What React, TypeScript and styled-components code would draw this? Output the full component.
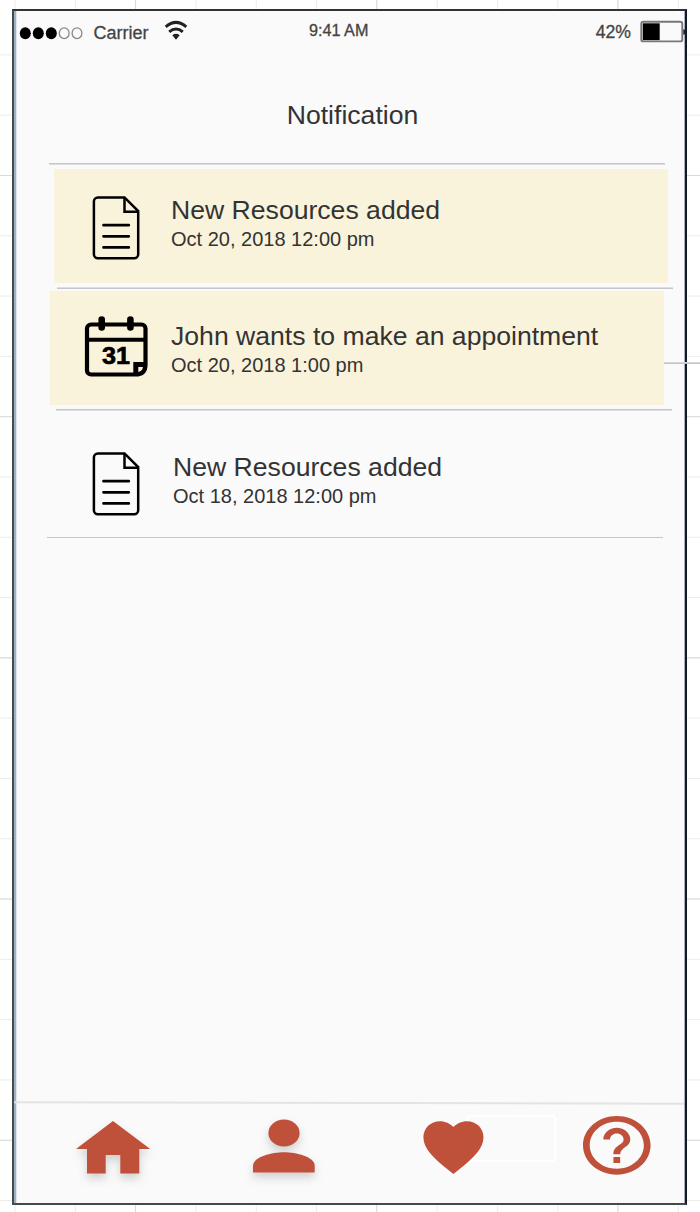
import React from "react";
import styled, { createGlobalStyle } from "styled-components";

const GlobalStyle = createGlobalStyle`
  html, body { margin: 0; padding: 0; }
  body { background: #fff; font-family: "Liberation Sans", Arial, sans-serif; color: #333; overflow: hidden; }
  svg { display: block; flex: none; overflow: visible; }
`;

const Canvas = styled.div`
  box-sizing: border-box;
  position: relative;
  width: 700px;
  height: 1212px;
  overflow: hidden;
  padding: 9px 0 0 12px;
  background-color: #fff;
  background-image:
    linear-gradient(to right, #dadada 1px, transparent 1px),
    linear-gradient(to bottom, #dadada 1px, transparent 1px),
    linear-gradient(to right, #ececec 1px, transparent 1px),
    linear-gradient(to bottom, #ececec 1px, transparent 1px);
  background-size: 241.2px 100%, 100% 241.2px, 60.3px 100%, 100% 60.3px;
  background-position: 135px 0, 0 175px, 14.6px 0, 0 54.4px;
`;

const Phone = styled.main`
  box-sizing: border-box;
  display: flex;
  flex-direction: column;
  width: 675px;
  height: 1196px;
  border: 2px solid #454a4a;
  border-top-color: #333;
  border-right-color: #15191f;
  background: #fafafa;
  box-shadow: inset 2px 0 #9fb2c4, inset 3px 0 #dfe6ed, inset -1px 0 #a3b3c5;
`;

const StatusBar = styled.header`
  display: grid;
  grid-template-columns: 295px 1fr auto;
  height: 44px;
  color: #444;
  -webkit-text-stroke: 0.3px #444;
`;

const StatusGroup = styled.div<{ $top: number; $left?: number }>`
  display: flex;
  align-items: center;
  height: 20px;
  margin-top: ${(p) => p.$top}px;
  padding-left: ${(p) => p.$left ?? 0}px;
`;

const StatusText = styled.span<{ $size: number }>`
  font-size: ${(p) => p.$size}px;
  line-height: 20px;
  white-space: nowrap;
`;

const Carrier = styled(StatusText)`
  margin: 0 15.5px 0 9.5px;
`;

const BatteryLevel = styled(StatusText)`
  margin-right: 8px;
`;

const Heading = styled.h1`
  margin: 45px 0 33px;
  padding-left: 6px;
  font-size: 26.6px;
  line-height: 30px;
  font-weight: 400;
  text-align: center;
`;

const Divider = styled.hr<{ $left: number; $soft?: "top" | "bottom" }>`
  flex: none;
  width: 616px;
  height: 1px;
  margin: 0 0 0 ${(p) => p.$left}px;
  border: 0 solid #dfdfe1;
  border-top-width: ${(p) => (p.$soft === "top" ? 1 : 0)}px;
  border-bottom-width: ${(p) => (p.$soft === "bottom" ? 1 : 0)}px;
  background: #c6c6c8;
`;

const Notice = styled.article<{ $left: number; $top: number; $height: number; $pad: number; $unread?: boolean }>`
  box-sizing: border-box;
  flex: none;
  display: flex;
  width: 614px;
  height: ${(p) => p.$height}px;
  margin: ${(p) => p.$top}px 0 4px ${(p) => p.$left}px;
  padding-left: ${(p) => p.$pad}px;
  background: ${(p) => (p.$unread ? "#faf3dc" : "transparent")};
`;

const NoticeIcon = styled.div<{ $top: number; $width: number }>`
  width: ${(p) => p.$width}px;
  padding-top: ${(p) => p.$top}px;
`;

const NoticeBody = styled.div<{ $top: number }>`
  padding-top: ${(p) => p.$top}px;
  white-space: nowrap;
`;

const NoticeTitle = styled.h2`
  margin: 0;
  font-size: 26.6px;
  line-height: 30px;
  font-weight: 400;
`;

const NoticeTime = styled.time`
  display: block;
  margin-top: 2px;
  font-size: 20px;
  line-height: 24px;
`;

const Connector = styled.div`
  position: absolute;
  top: 362px;
  left: 664px;
  width: 36px;
  height: 1px;
  border-bottom: 1px solid #c4c4c4;
  background: #d8d8d8;
`;

const TabRule = styled.div`
  flex: none;
  height: 2px;
  width: 670px;
  margin-top: auto;
  background: #e3e3e3;
  transform: rotate(0.12deg);
`;

const TabBar = styled.nav`
  flex: none;
  display: flex;
  align-items: flex-start;
  height: 99px;
`;

const Tab = styled.a<{ $left: number; $top: number; $shadow?: boolean }>`
  position: relative;
  margin-left: ${(p) => p.$left}px;
  margin-top: ${(p) => p.$top}px;
  svg { position: relative; filter: ${(p) => (p.$shadow ? "drop-shadow(0 5px 5px rgba(0,0,0,.17))" : "none")}; }
`;

const GhostBox = styled.span`
  position: absolute;
  top: -6px;
  left: 43px;
  box-sizing: border-box;
  width: 90px;
  height: 47px;
  border: 2px solid #fff;
  border-radius: 4px;
`;

const RED = "#bf513b";

const SignalDots = () => (
  <svg width="64" height="14" viewBox="20 26 64 14">
    {[25.3, 38.3, 51.3].map((x) => <ellipse key={x} cx={x} cy="33.2" rx="5.5" ry="6" fill="#000" />)}
    {[64.2, 77].map((x) => <ellipse key={x} cx={x} cy="33.2" rx="4.9" ry="5.4" fill="none" stroke="#888" strokeWidth="1.3" />)}
  </svg>
);

const WifiIcon = () => (
  <svg width="24" height="24" viewBox="164 21 24 24" fill="none" stroke="#222" strokeWidth="3">
    <path d="M165.700 26.800Q176 18 186.300 26.800" />
    <path d="M169.200 31.800Q176 26.200 182.800 31.800" />
    <path d="M172.300 35.200Q176 32.400 179.700 35.200L176 39.700Z" fill="#222" stroke="none" />
  </svg>
);

const BatteryIcon = () => (
  <svg width="46" height="24" viewBox="639 20 46 24">
    <rect x="641.3" y="21.8" width="41" height="19.6" rx="2" fill="#fafafa" stroke="#777" strokeWidth="1.9" />
    <rect x="642.8" y="23.300" width="16.900" height="16.800" fill="#000" />
    <path d="M683.3 29q2.300.5 2.300 3t-2.300 3z" fill="#222" />
  </svg>
);

const DocumentIcon = () => (
  <svg width="48" height="64" viewBox="92 194.6 48 64" fill="none" stroke="#000" strokeWidth="2.5">
    <path d="M97.900 197h26.600l13.700 13.700v43.100a4 4 0 0 1-4 4H97.900a4 4 0 0 1-4-4V201a4 4 0 0 1 4-4z" />
    <path d="M124.500 197v14.300h13.900" />
    <path d="M103.500 224.800h25.300M103.500 235.900h25.300M103.500 247h25.300" strokeLinecap="round" strokeWidth="2.700" />
  </svg>
);

const CalendarIcon = () => (
  <svg width="64" height="62" viewBox="84 314.500 64 62">
    <path d="M91 324h50.500a4 4 0 0 1 4 4v36q0 10-10 10H91a4 4 0 0 1-4-4V328a4 4 0 0 1 4-4z" fill="none" stroke="#000" strokeWidth="4.200" />
    <path d="M86 339.200h60" stroke="#000" strokeWidth="4" />
    <path d="M101.700 319v8M130.400 319v8" stroke="#000" strokeWidth="6.600" strokeLinecap="round" />
    <path d="M133.300 375V361.600h13v4.800q-1 7-9 8.600z" fill="#000" />
    <path d="M138.300 366.600h4.600q-.3 4-4.600 4.900z" fill="#faf3dc" />
    <text x="102" y="363.600" fontFamily="Liberation Sans" fontWeight="700" fontSize="24.500" textLength="28" lengthAdjust="spacingAndGlyphs" stroke="#000" strokeWidth=".7">31</text>
  </svg>
);

const HomeIcon = () => (
  <svg width="74" height="53" viewBox="76 1121 74 53" fill={RED}>
    <path d="M113 1121L150.200 1149H139.300V1173.500H120.300V1155H105.700V1173.500H87V1149H76z" />
  </svg>
);

const PersonIcon = () => (
  <svg width="63" height="54" viewBox="252 1118.700 63 54" fill={RED}>
    <ellipse cx="284" cy="1132.700" rx="15.600" ry="13.600" />
    <path d="M253 1172.300V1165.500C253 1156.500 272 1152 284 1152S314.700 1156.500 314.700 1165.500V1172.300z" />
  </svg>
);

const HeartIcon = () => (
  <svg width="61" height="53" viewBox="422.500 1121 61 53" fill={RED}>
    <path d="M452.900 1174L448.500 1170.500C433 1158 422.900 1149 422.900 1137.300C422.900 1128 430 1121.200 439.500 1121.200C444.700 1121.200 449.700 1123.400 452.900 1127.100C456.200 1123.400 461.200 1121.200 466.400 1121.200C475.900 1121.200 483 1128 483 1137.300C483 1149 472.800 1158 457.300 1170.500z" />
  </svg>
);

const HelpIcon = () => (
  <svg width="67.6" height="58.7" viewBox="2 2 20 20" preserveAspectRatio="none" fill={RED}>
    <path d="M11 18h2v-2h-2v2zm1-16C6.480 2 2 6.480 2 12s4.480 10 10 10 10-4.480 10-10S17.520 2 12 2zm0 18c-4.410 0-8-3.590-8-8s3.590-8 8-8 8 3.590 8 8-3.590 8-8 8zm0-14c-2.210 0-4 1.790-4 4h2c0-1.100.900-2 2-2s2 .900 2 2c0 2-3 1.750-3 5h2c0-2.250 3-2.500 3-5 0-2.210-1.790-4-4-4z" />
  </svg>
);

export default function App() {
  return (
    <>
      <GlobalStyle />
      <Canvas>
        <Phone>
          <StatusBar>
            <StatusGroup $top={12} $left={6}>
              <SignalDots />
              <Carrier $size={18}>Carrier</Carrier>
              <WifiIcon />
            </StatusGroup>
            <StatusGroup $top={9}>
              <StatusText $size={16.2}>9:41 AM</StatusText>
            </StatusGroup>
            <StatusGroup $top={11}>
              <BatteryLevel $size={17.6}>42%</BatteryLevel>
              <BatteryIcon />
            </StatusGroup>
          </StatusBar>
          <Heading>Notification</Heading>
          <Divider $left={34.5} $soft="bottom" />
          <Notice $left={40} $top={4} $height={114} $pad={38} $unread>
            <NoticeIcon $top={26} $width={79}><DocumentIcon /></NoticeIcon>
            <NoticeBody $top={26}>
              <NoticeTitle>New Resources added</NoticeTitle>
              <NoticeTime>Oct 20, 2018 12:00 pm</NoticeTime>
            </NoticeBody>
          </Notice>
          <Divider $left={43} $soft="top" />
          <Notice $left={36} $top={2} $height={114} $pad={34} $unread>
            <NoticeIcon $top={24} $width={87}><CalendarIcon /></NoticeIcon>
            <NoticeBody $top={30}>
              <NoticeTitle>John wants to make an appointment</NoticeTitle>
              <NoticeTime>Oct 20, 2018 1:00 pm</NoticeTime>
            </NoticeBody>
          </Notice>
          <Divider $left={42} $soft="bottom" />
          <Notice $left={36} $top={3} $height={119} $pad={42}>
            <NoticeIcon $top={37} $width={81}><DocumentIcon /></NoticeIcon>
            <NoticeBody $top={38}>
              <NoticeTitle>New Resources added</NoticeTitle>
              <NoticeTime>Oct 18, 2018 12:00 pm</NoticeTime>
            </NoticeBody>
          </Notice>
          <Divider $left={33} />
          <TabRule />
          <TabBar>
            <Tab $left={62} $top={17} $shadow><HomeIcon /></Tab>
            <Tab $left={102} $top={15} $shadow><PersonIcon /></Tab>
            <Tab $left={108} $top={17}><GhostBox /><HeartIcon /></Tab>
            <Tab $left={98.5} $top={11.5}><HelpIcon /></Tab>
          </TabBar>
        </Phone>
        <Connector />
      </Canvas>
    </>
  );
}
